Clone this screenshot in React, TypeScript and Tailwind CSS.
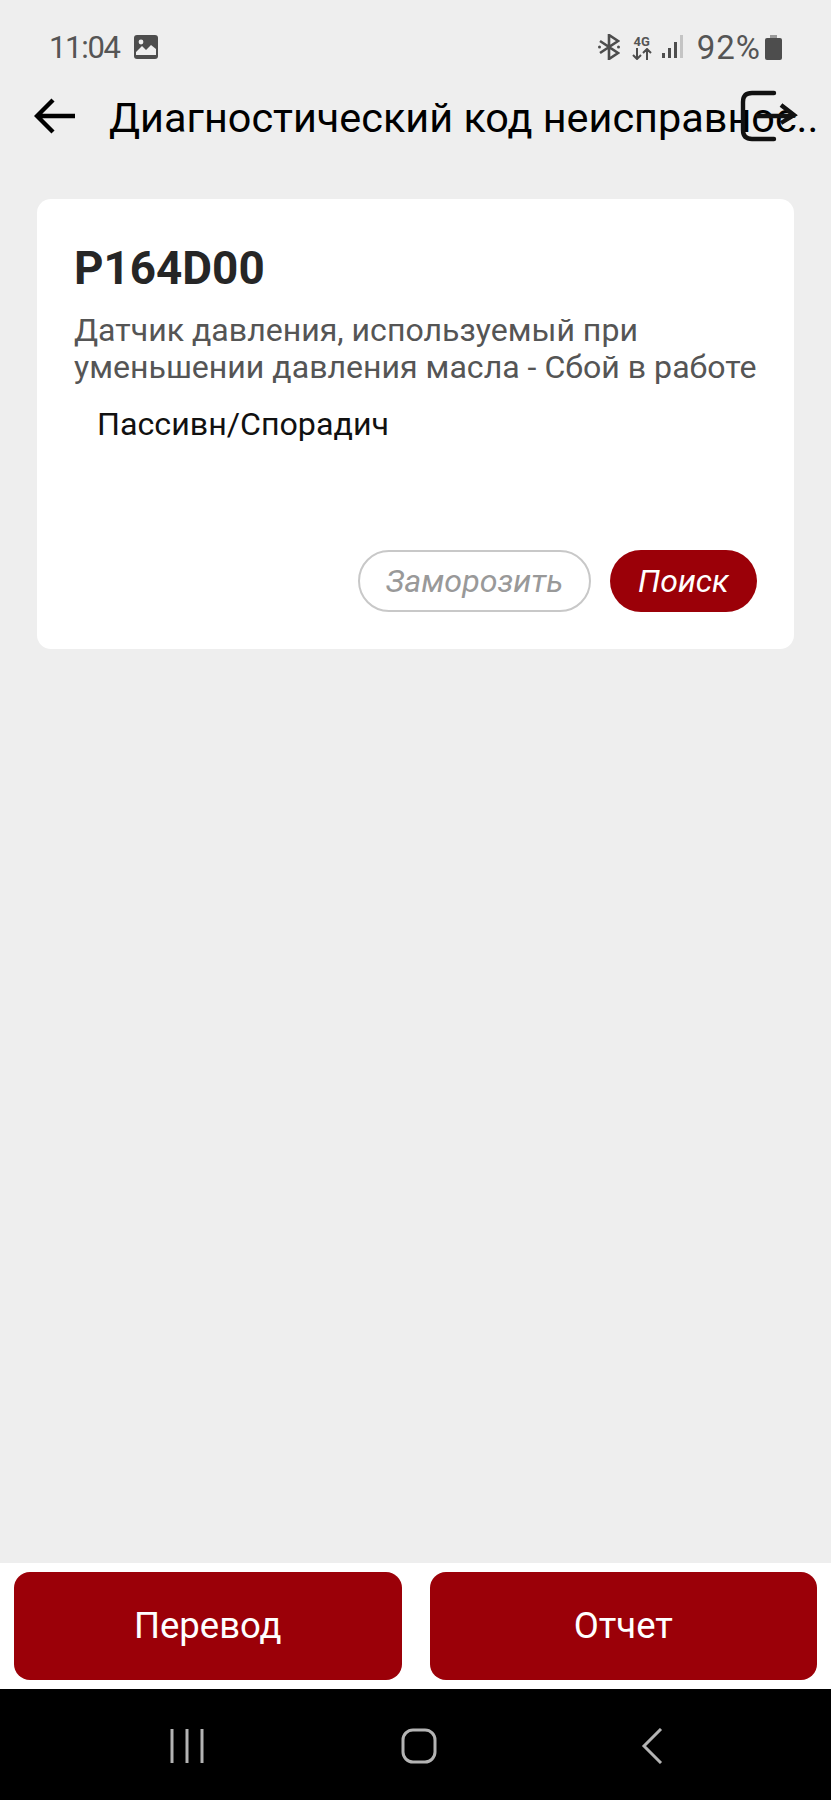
const font = { fontFamily: 'Roboto, "Liberation Sans", sans-serif' }

function StatusBar() {
  return (
    <div className="flex h-[94px] items-center justify-between pl-[49px] pr-[49px] text-[#555555]">
      <div className="flex items-center gap-[14px]">
        <span className="text-[31px] leading-none tracking-[-1.3px]">11:04</span>
        <svg width="24" height="24" viewBox="0 0 24 24">
          <rect x="0" y="0" width="24" height="24" rx="3" fill="#4d4d4d" />
          <circle cx="7" cy="7" r="2.4" fill="#eeeeee" />
          <path d="M2 20 L2 17 L8 11 L12 15 L17 10 L22 14 L22 20 Z" fill="#eeeeee" />
        </svg>
      </div>
      <div className="flex items-center">
        <svg width="22" height="26" viewBox="0 0 22 26" fill="none" stroke="#4d4d4d" strokeWidth="2.6">
          <path d="M2 7 L20 19 L11 25 L11 1 L20 7 L2 19" />
          <circle cx="1.5" cy="13" r="1.5" fill="#4d4d4d" stroke="none" />
          <circle cx="20.5" cy="13" r="1.5" fill="#4d4d4d" stroke="none" />
        </svg>
        <div className="ml-[12px] flex w-[20px] flex-col items-center">
          <span className="text-[13px] font-bold leading-[13px]">4G</span>
          <svg width="20" height="12" viewBox="0 0 20 12" fill="none" stroke="#4d4d4d" strokeWidth="2">
            <path d="M5 0 V11 M1 7 L5 11 L9 7 M15 12 V1 M11 5 L15 1 L19 5" />
          </svg>
        </div>
        <svg className="ml-[10px]" width="22" height="24" viewBox="0 0 22 24">
          <rect x="0" y="18" width="3" height="5" fill="#4d4d4d" />
          <rect x="6" y="13" width="3" height="10" fill="#4d4d4d" />
          <rect x="12" y="7" width="3" height="16" fill="#4d4d4d" />
          <rect x="18" y="0" width="3" height="23" fill="#c4c4c4" />
        </svg>
        <span className="ml-[13px] text-[33px] leading-none tracking-[1px]">92%</span>
        <svg className="ml-[4px]" width="17" height="25" viewBox="0 0 17 25">
          <rect x="5" y="0" width="7" height="3" fill="#9a9a9a" />
          <rect x="0" y="3" width="17" height="22" rx="2" fill="#4d4d4d" />
        </svg>
      </div>
    </div>
  )
}

function Header() {
  return (
    <div className="relative flex h-[50px] items-center">
      <svg className="ml-[34px] mt-[-6px]" width="42" height="36" viewBox="0 0 42 36" fill="none" stroke="#000000" strokeWidth="4.4">
        <path d="M41 18 H3 M19 2 L3 18 L19 34" />
      </svg>
      <span className="ml-[33px] mt-[-1px] whitespace-nowrap text-[41.4px] leading-none text-black">Диагностический код неисправнос..</span>
      <svg className="absolute left-[740px] top-[-4px]" width="58" height="52" viewBox="0 0 58 52" fill="none" stroke="#111111" strokeWidth="4.4">
        <path d="M34 3 H12 Q3 3 3 12 V40 Q3 49 12 49 H34" strokeLinecap="round" />
        <path d="M16 26 H53 M41 15 L54 25 L41 33" />
      </svg>
    </div>
  )
}

function Card() {
  return (
    <div className="mx-[37px] mt-[55px] flex h-[450px] flex-col rounded-[14px] bg-white pl-[37px] pr-[37px]">
      <h1 className="mt-[44px] text-[45.8px] font-bold leading-[52px] text-[#262626]">P164D00</h1>
      <p className="mt-[17px] text-[32.1px] leading-[37px] text-[#555555]">
        Датчик давления, используемый при уменьшении давления масла - Сбой в работе
      </p>
      <p className="ml-[23px] mt-[20px] text-[32.2px] leading-[36px] text-[#111111]">Пассивн/Спорадич</p>
      <div className="mt-auto mb-[37px] flex justify-end gap-[19px]">
        <button className="flex h-[62px] w-[233px] items-center justify-center rounded-full border-2 border-[#c8c8c8] text-[32.2px] italic text-[#999999]">
          Заморозить
        </button>
        <button className="flex h-[62px] w-[147px] items-center justify-center rounded-full bg-[#9b0008] text-[32px] italic text-white">
          Поиск
        </button>
      </div>
    </div>
  )
}

function BottomBar() {
  return (
    <div className="mt-auto flex h-[126px] gap-[28px] bg-white px-[14px] py-[9px]">
      <button className="flex-1 rounded-[16px] bg-[#9b0008] text-[36.5px] text-white">Перевод</button>
      <button className="flex-1 rounded-[16px] bg-[#9b0008] text-[36.5px] text-white">Отчет</button>
    </div>
  )
}

function NavBar() {
  return (
    <div className="flex h-[111px] items-start bg-black pl-[170px] pt-[39px]">
      <svg width="34" height="36" viewBox="0 0 34 36" fill="none" stroke="#b4b4b4" strokeWidth="3">
        <path d="M2 1 V35 M17 1 V35 M32 1 V35" />
      </svg>
      <svg className="ml-[197px]" width="36" height="36" viewBox="0 0 36 36" fill="none" stroke="#b4b4b4" strokeWidth="3">
        <rect x="2" y="2" width="32" height="32" rx="10" />
      </svg>
      <svg className="ml-[204px]" width="22" height="36" viewBox="0 0 22 36" fill="none" stroke="#b4b4b4" strokeWidth="3">
        <path d="M20 1 L3 18 L20 35" />
      </svg>
    </div>
  )
}

export default function App() {
  return (
    <div className="flex h-[1800px] w-[831px] flex-col overflow-hidden bg-[#eeeeee]" style={font}>
      <StatusBar />
      <Header />
      <Card />
      <BottomBar />
      <NavBar />
    </div>
  )
}
